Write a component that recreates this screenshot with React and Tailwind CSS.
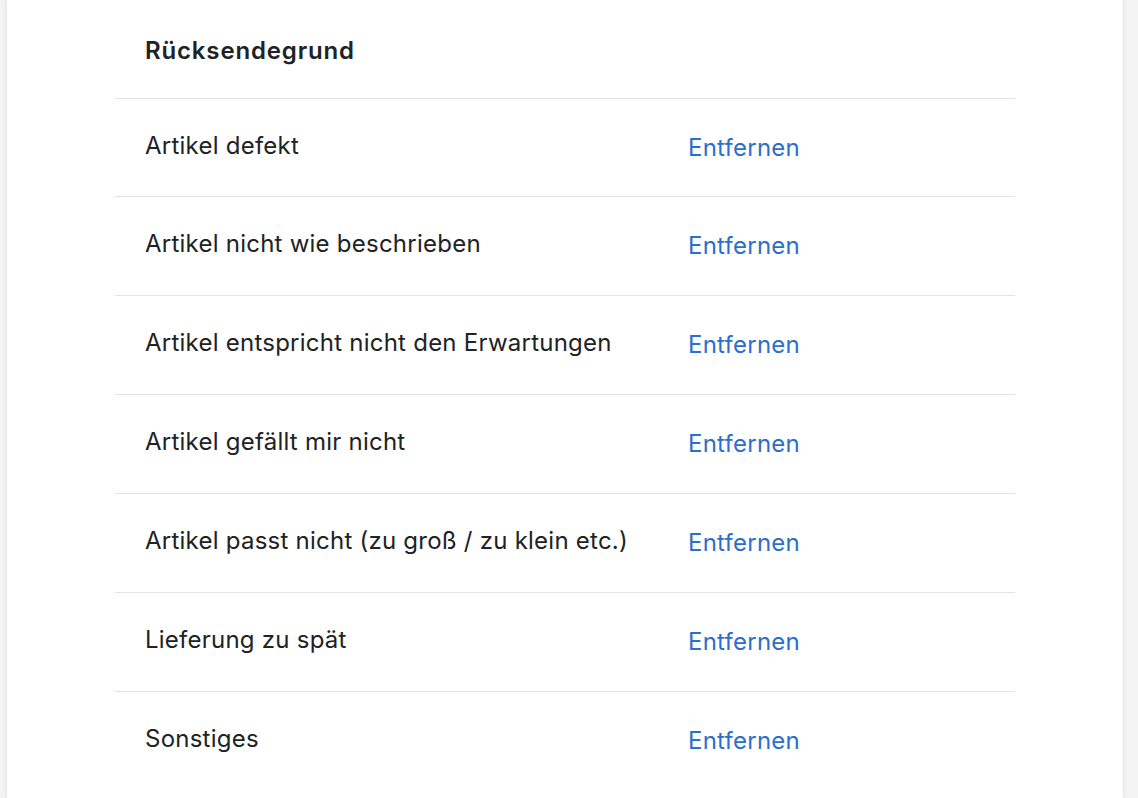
import React from "react";

const rows = [
  "Artikel defekt",
  "Artikel nicht wie beschrieben",
  "Artikel entspricht nicht den Erwartungen",
  "Artikel gefällt mir nicht",
  "Artikel passt nicht (zu groß / zu klein etc.)",
  "Lieferung zu spät",
  "Sonstiges",
];

export default function App() {
  return (
    <div
      className="w-[1138px] h-[798px] overflow-hidden bg-[#f3f3f3] flex pl-[7px] pr-[15px]"
      style={{ fontFamily: "Inter, 'Noto Sans', sans-serif" }}
    >
      <div className="flex-1 bg-white shadow-[0_0_4px_rgba(0,0,0,0.12)] px-[108px]">
        <div className="h-[98px] flex items-center px-[30px] pt-[3px] text-[24px] font-semibold tracking-[0.035em] text-[#202223]">
          Rücksendegrund
        </div>
        {rows.map((r, i) => (
          <div
            key={r}
            className={`${i === 0 ? "h-[98px]" : "h-[99px]"} border-t border-[#e1e3e5] grid grid-cols-[543px_1fr] items-center text-[24px] tracking-[0.01em] text-[#202223]`}
          >
            <div className="px-[30px] pb-[4px] whitespace-nowrap">{r}</div>
            <div className="px-[30px] text-[#2c6ecb]">Entfernen</div>
          </div>
        ))}
      </div>
    </div>
  );
}
